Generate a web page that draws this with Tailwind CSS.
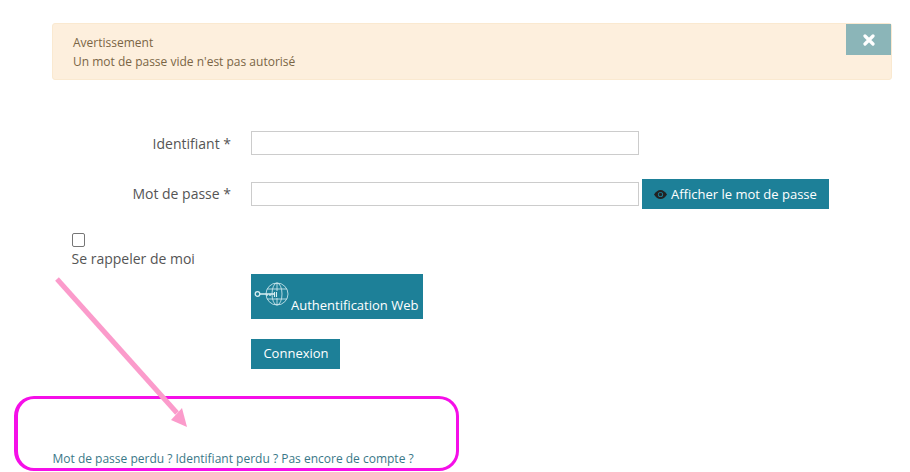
<!DOCTYPE html>
<html lang="fr">
<head>
<meta charset="utf-8">
<script src="https://cdn.jsdelivr.net/npm/@tailwindcss/browser@4"></script>
</head>
<body class="bg-white font-['Open_Sans',sans-serif] text-[#555] overflow-hidden">
<div class="relative w-[910px] h-[472px] overflow-hidden pt-[23px]">
  <div class="relative ml-[52px] w-[840px] h-[57px] bg-[#fdefdd] border border-[#fae9d0] rounded-[3px] pl-[20px] pt-[9px] text-[12px] leading-[19px] text-[#7a6545]">
    <div>Avertissement</div>
    <div>Un mot de passe vide n'est pas autorisé</div>
    <button class="absolute right-0 top-0 w-[45px] h-[31px] bg-[#8bb5b8] flex items-center justify-center">
      <svg width="12" height="12" viewBox="0 0 12 12"><path d="M2 2L10 10M10 2L2 10" stroke="#fff" stroke-width="3.2" stroke-linecap="round"/></svg>
    </button>
  </div>

  <div class="mt-[51px] flex items-center h-[24px]">
    <label class="w-[231px] text-right text-[14px]">Identifiant *</label>
    <input class="ml-[20px] w-[388px] h-[24px] border border-[#ccc] bg-white" type="text">
  </div>
  <div class="mt-[24px] flex items-center h-[30px]">
    <label class="w-[231px] text-right text-[14px] -translate-y-px">Mot de passe *</label>
    <input class="ml-[20px] w-[388px] h-[24px] border border-[#ccc] bg-white" type="password">
    <button class="ml-[3px] w-[187px] h-[30px] pt-[1px] bg-[#1d8098] text-white text-[13px] flex items-center justify-center gap-[4px]">
      <svg width="13" height="9" viewBox="0 0 13 9"><path d="M0 4.5C2 1.5 4 0 6.5 0S11 1.5 13 4.5C11 7.500 9 9 6.500 9S2 7.500 0 4.500Z" fill="#222"/><circle cx="6.500" cy="4.500" r="2.600" fill="#1d8098"/><circle cx="6.500" cy="4.500" r="1.700" fill="#222"/></svg>
      <span>Afficher le mot de passe</span>
    </button>
  </div>

  <div class="ml-[72px] mt-[24px] h-[14px] leading-none">
    <span class="block w-[13px] h-[14px] border border-[#767676] rounded-[2px] bg-white"></span>
  </div>
  <div class="ml-[71.500px] mt-[2px] text-[14px] leading-[20px]">Se rappeler de moi</div>

  <div class="ml-[251px] mt-[5px] w-[172px] h-[45px] bg-[#1d8098] relative text-white text-[13px]">
    <svg class="absolute left-[3px] top-[7px]" width="36" height="26" viewBox="0 0 36 26" fill="none" stroke="#d8eef2" stroke-width="0.8">
      <circle cx="3.500" cy="13" r="2.300" stroke-width="1.300"/>
      <path d="M6 13H20M13 13v2M16 13v2" stroke-width="1.300"/>
      <path d="M20.500 11v5M22.500 11v5" stroke-width="1.100"/>
      <circle cx="23" cy="13" r="11"/>
      <ellipse cx="23" cy="13" rx="5" ry="11"/>
      <path d="M23 2V10M23 17V24M13 8H33M13 18H33"/>
    </svg>
    <span class="absolute left-[40px] top-[22px] leading-[18px] whitespace-nowrap">Authentification Web</span>
  </div>

  <button class="block ml-[251px] mt-[20px] w-[89px] h-[30px] pl-[1px] bg-[#1d8098] text-white text-[13px]">Connexion</button>

  <div class="ml-[52.500px] mt-[81px] text-[12px] leading-[18px] text-[#3a7888] whitespace-nowrap">Mot de passe perdu ? Identifiant perdu ? Pas encore de compte ?</div>

  <div class="absolute left-[14px] top-[396px] w-[445px] h-[75px] border-[3px] border-l-[4px] border-[#f50fe8] rounded-[20px] pointer-events-none"></div>
  <svg class="absolute left-0 top-0 pointer-events-none" width="910" height="472" viewBox="0 0 910 472">
    <path d="M57 279L177 413" stroke="#fb9bcb" stroke-width="5" fill="none"/>
    <path d="M187 427L171 420L182 408Z" fill="#fb9bcb"/>
  </svg>
</div>
</body>
</html>
